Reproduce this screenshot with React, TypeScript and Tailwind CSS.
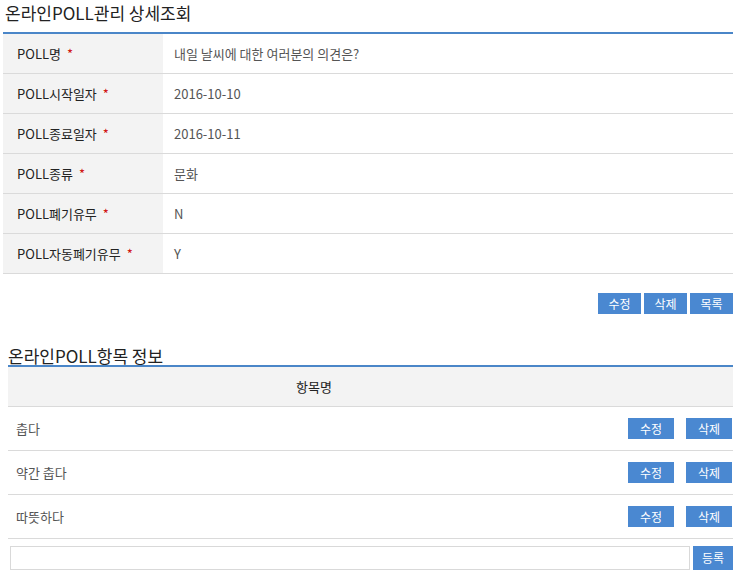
import React from 'react';

interface Field {
  label: string;
  value: string;
}

const FIELDS: Field[] = [
  { label: 'POLL명', value: '내일 날씨에 대한 여러분의 의견은?' },
  { label: 'POLL시작일자', value: '2016-10-10' },
  { label: 'POLL종료일자', value: '2016-10-11' },
  { label: 'POLL종류', value: '문화' },
  { label: 'POLL폐기유무', value: 'N' },
  { label: 'POLL자동폐기유무', value: 'Y' },
];

const ITEMS = ['춥다', '약간 춥다', '따뜻하다'];

const font = { fontFamily: '"Noto Sans CJK KR", "Noto Sans", sans-serif' };

const BlueButton: React.FC<{ label: string; className?: string }> = ({ label, className = '' }) => (
  <button
    className={`bg-[#4a88d1] text-white text-[12px] leading-none flex items-center justify-center ${className}`}
  >
    {label}
  </button>
);

export default function App() {
  return (
    <div className="w-[742px] h-[577px] bg-white text-[#222] overflow-hidden" style={font}>
      {/* detail section */}
      <h2 className="h-[32px] pl-[5px] pt-[1px] text-[17px] leading-[24px] text-[#222]">온라인POLL관리 상세조회</h2>
      <div className="ml-[3px] w-[730px] border-t-2 border-[#4a86c8]">
        {FIELDS.map((f) => (
          <div key={f.label} className="flex h-[40px] border-b border-[#dadada]">
            <div className="w-[160px] bg-[#f3f3f3] flex items-center pl-[14px] text-[13px] text-[#222]">
              {f.label}
              <span className="ml-[6px] text-[#d01010]">*</span>
            </div>
            <div className="flex-1 flex items-center pl-[11px] text-[13px] text-[#555]">{f.value}</div>
          </div>
        ))}
      </div>
      <div className="ml-[3px] w-[730px] flex justify-end gap-[3px] mt-[19px]">
        <BlueButton label="수정" className="w-[43px] h-[21px]" />
        <BlueButton label="삭제" className="w-[43px] h-[21px]" />
        <BlueButton label="목록" className="w-[43px] h-[21px]" />
      </div>

      {/* item section */}
      <h2 className="mt-[32px] h-[19px] pl-[8px] text-[17px] leading-[19px] text-[#222]">온라인POLL항목 정보</h2>
      <div className="ml-[8px] w-[725px] border-t-2 border-[#4a86c8]">
        <div className="flex h-[40px] bg-[#f3f3f3] border-b border-[#dadada] text-[13px] text-[#222]">
          <div className="w-[612px] flex items-center justify-center">항목명</div>
          <div className="flex-1" />
        </div>
        {ITEMS.map((item) => (
          <div key={item} className="flex items-center h-[44px] border-b border-[#dadada]">
            <div className="flex-1 pl-[8px] text-[13px] text-[#555]">{item}</div>
            <div className="flex gap-[12px] pr-[1px]">
              <BlueButton label="수정" className="w-[46px] h-[21px]" />
              <BlueButton label="삭제" className="w-[46px] h-[21px]" />
            </div>
          </div>
        ))}
        <div className="flex items-center mt-[7px] gap-[3px] pl-[2px]">
          <input className="w-[680px] h-[24px] border border-[#d9d9d9] outline-none" />
          <BlueButton label="등록" className="w-[40px] h-[24px]" />
        </div>
      </div>
    </div>
  );
}
